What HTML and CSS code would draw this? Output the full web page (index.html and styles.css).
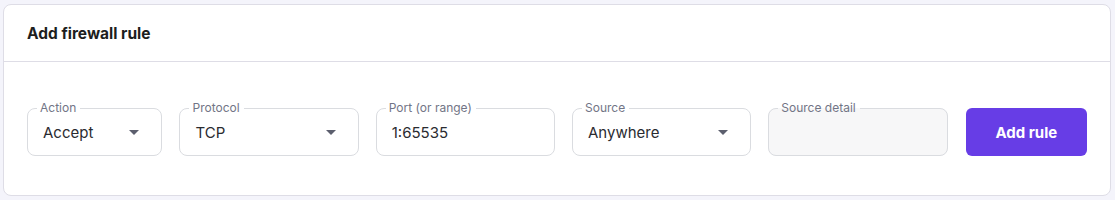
FILE: index.html
```html
<!DOCTYPE html>
<html lang="en">
<head>
    <meta charset="UTF-8">
    <meta name="viewport" content="width=device-width, initial-scale=1.0">
    <title>Add firewall rule</title>
    <link rel="stylesheet" href="styles.css">
</head>
<body>
    <div class="card">
        <div class="card-header">Add firewall rule</div>
        <div class="card-body">
            <fieldset class="field field-action">
                <legend>Action</legend>
                <div class="value">Accept <span class="caret"></span></div>
            </fieldset>
            <fieldset class="field field-wide">
                <legend>Protocol</legend>
                <div class="value">TCP <span class="caret"></span></div>
            </fieldset>
            <fieldset class="field field-wide">
                <legend>Port (or range)</legend>
                <div class="value">1:65535</div>
            </fieldset>
            <fieldset class="field field-wide">
                <legend>Source</legend>
                <div class="value">Anywhere <span class="caret"></span></div>
            </fieldset>
            <fieldset class="field field-wide disabled">
                <legend>Source detail</legend>
                <div class="value"></div>
            </fieldset>
            <button class="btn-add">Add rule</button>
        </div>
    </div>
</body>
</html>
```

FILE: styles.css
```css
html, body {
    margin: 0;
    padding: 0;
    background: #f4f4fb;
    font-family: Inter, "Noto Sans", sans-serif;
    color: #1d1e20;
}
*, *::before, *::after {
    box-sizing: border-box;
}
body {
    padding: 4px 4px 4px 3px;
}
.card {
    background: #fff;
    border: 1px solid #dedde6;
    border-radius: 8px;
    height: 192px;
}
.card-header {
    height: 57px;
    padding: 0 23px;
    display: flex;
    align-items: center;
    font-size: 15.5px;
    font-weight: 700;
    border-bottom: 1px solid #dedde6;
}
.card-body {
    display: flex;
    align-items: flex-end;
    gap: 17px;
    padding: 39px 23px 0;
}
.field {
    margin: 0;
    padding: 0 15px;
    border: 1px solid #dadce0;
    border-radius: 8px;
    height: 55px;
    min-width: 0;
}
.field-action {
    width: 136px;
}
.field-wide {
    width: 180px;
}
.field legend {
    font-size: 12px;
    line-height: 14px;
    color: #727586;
    padding: 0 4px 0 3px;
    margin-left: -6px;
}
.value {
    height: 34px;
    display: flex;
    align-items: center;
    justify-content: space-between;
    font-size: 15px;
    color: #2a2b30;
}
.caret {
    width: 0;
    height: 0;
    border-left: 5px solid transparent;
    border-right: 5px solid transparent;
    border-top: 5px solid #5c5f6e;
    margin-right: 7px;
}
.disabled {
    background: #f7f7f8;
}
.btn-add {
    width: 122px;
    height: 48px;
    margin-left: 1px;
    border: none;
    border-radius: 6px;
    background: #673de6;
    color: #fff;
    font-family: inherit;
    font-size: 15px;
    font-weight: 700;
}
```
